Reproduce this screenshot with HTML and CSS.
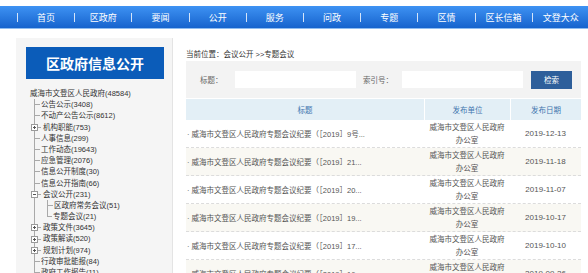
FILE: index.html
```html
<!DOCTYPE html>
<html lang="zh-CN">
<head>
<meta charset="utf-8">
<title>专题会议</title>
<link rel="stylesheet" href="styles.css">
</head>
<body>
<div class="topbar">
  <ul class="nav">
    <li><span>首页</span></li>
    <li><span>区政府</span></li>
    <li><span>要闻</span></li>
    <li><span>公开</span></li>
    <li><span>服务</span></li>
    <li><span>问政</span></li>
    <li><span>专题</span></li>
    <li><span>区情</span></li>
    <li><span>区长信箱</span></li>
    <li><span>文登大众</span></li>
    <li><span></span></li>
  </ul>
</div>
<div class="page">
  <aside class="side">
    <div class="side-title">区政府信息公开</div>
    <div class="tree">
      <div class="root">威海市文登区人民政府(48584)</div>
      <ul class="lvl1">
        <li><div class="node"><span class="stub"></span>公告公示(3408)</div></li>
        <li><div class="node"><span class="stub"></span>不动产公告公示(8612)</div></li>
        <li><div class="node"><span class="tog plus"></span><span class="stub short"></span>机构职能(753)</div></li>
        <li><div class="node"><span class="stub"></span>人事信息(299)</div></li>
        <li><div class="node"><span class="stub"></span>工作动态(19643)</div></li>
        <li><div class="node"><span class="stub"></span>应急管理(2076)</div></li>
        <li><div class="node"><span class="stub"></span>信息公开制度(30)</div></li>
        <li><div class="node"><span class="stub"></span>信息公开指南(66)</div></li>
        <li>
          <div class="node"><span class="tog minus"></span><span class="stub short"></span>会议公开(231)</div>
          <ul class="lvl2">
            <li><div class="node"><span class="stub"></span>区政府常务会议(51)</div></li>
            <li class="last"><div class="node"><span class="stub elbow"></span>专题会议(21)</div></li>
          </ul>
        </li>
        <li><div class="node"><span class="tog plus"></span><span class="stub short"></span>政策文件(3645)</div></li>
        <li><div class="node"><span class="tog plus"></span><span class="stub short"></span>政策解读(520)</div></li>
        <li><div class="node"><span class="tog plus"></span><span class="stub short"></span>规划计划(974)</div></li>
        <li><div class="node"><span class="stub"></span>行政审批能报(84)</div></li>
        <li><div class="node"><span class="stub"></span>政府工作报告(11)</div></li>
      </ul>
    </div>
  </aside>
  <main class="content">
    <div class="crumb">当前位置：会议公开 &gt;&gt;专题会议</div>
    <div class="search">
      <span class="lbl lbl1">标题：</span>
      <input class="ipt" type="text">
      <span class="lbl lbl2">索引号：</span>
      <input class="ipt" type="text">
      <button class="btn" type="button">检索</button>
    </div>
    <div class="thead">
      <div>标题</div>
      <div>发布单位</div>
      <div>发布日期</div>
    </div>
    <div class="rows">
      <div class="row"><div class="c-title">· 威海市文登区人民政府专题会议纪要（［2019］9号...</div><div class="c-unit">威海市文登区人民政府办公室</div><div class="c-date">2019-12-13</div></div>
      <div class="row"><div class="c-title">· 威海市文登区人民政府专题会议纪要（［2019］21...</div><div class="c-unit">威海市文登区人民政府办公室</div><div class="c-date">2019-11-18</div></div>
      <div class="row"><div class="c-title">· 威海市文登区人民政府专题会议纪要（［2019］20...</div><div class="c-unit">威海市文登区人民政府办公室</div><div class="c-date">2019-11-07</div></div>
      <div class="row"><div class="c-title">· 威海市文登区人民政府专题会议纪要（［2019］19...</div><div class="c-unit">威海市文登区人民政府办公室</div><div class="c-date">2019-10-17</div></div>
      <div class="row"><div class="c-title">· 威海市文登区人民政府专题会议纪要（［2019］17...</div><div class="c-unit">威海市文登区人民政府办公室</div><div class="c-date">2019-10-10</div></div>
      <div class="row"><div class="c-title">· 威海市文登区人民政府专题会议纪要（［2019］16...</div><div class="c-unit">威海市文登区人民政府办公室</div><div class="c-date">2019-09-26</div></div>
    </div>
  </main>
</div>
</body>
</html>
```
FILE: styles.css
```css
html, body {
  margin: 0;
  padding: 0;
  background: #fff;
  overflow: hidden;
}
body {
  font-family: "Liberation Sans", "Noto Sans CJK SC", sans-serif;
  font-size: 7.5px;
  color: #333;
}
.topbar {
  margin-top: 6px;
  height: 22px;
  background: linear-gradient(#3e92f3, #1663cd);
  border-bottom: 1px solid #8ebcf0;
  overflow: hidden;
}
.nav {
  list-style: none;
  margin: 0;
  padding: 0 0 0 17px;
  display: flex;
  height: 22px;
  white-space: nowrap;
}
.nav li {
  flex: 0 0 57.2px;
  display: flex;
  align-items: center;
  color: #fff;
  font-size: 9px;
}
.nav li::before {
  content: "";
  width: 1px;
  height: 9px;
  background: rgba(255, 255, 255, 0.8);
}
.nav li span {
  flex: 1;
  text-align: center;
}
.page {
  display: flex;
  align-items: flex-start;
  margin-top: 9px;
  padding-left: 16px;
}
.side {
  flex: 0 0 157px;
  box-sizing: border-box;
  height: 260px;
  background: #f5f5f5;
  border-right: 1px solid #e4e4e4;
  padding: 9px 0 0 10px;
}
.side-title {
  width: 138px;
  height: 32px;
  background: #0b5cb9;
  color: #fff;
  font-size: 14px;
  font-weight: bold;
  display: flex;
  align-items: center;
  justify-content: center;
}
.tree {
  margin-top: 9px;
  padding-left: 4px;
  line-height: 11.2px;
  white-space: nowrap;
}
.tree ul {
  list-style: none;
  margin: 0;
  padding: 0;
}
.lvl1 {
  margin-left: 4px !important;
  border-left: 1px solid #a9a9a9;
}
.lvl2 {
  margin-left: 12px !important;
}
.lvl2 li {
  border-left: 1px solid #a9a9a9;
}
.lvl2 li.last {
  border-left: none;
}
.node {
  display: flex;
  align-items: center;
  height: 11.2px;
}
.stub {
  flex: 0 0 5px;
  height: 1px;
  background: #a9a9a9;
  margin-right: 1px;
}
.stub.short {
  flex-basis: 3px;
  margin-right: 2px;
}
.stub.elbow {
  flex-basis: 5px;
  height: 6px;
  align-self: flex-start;
  background: none;
  border-left: 1px solid #a9a9a9;
  border-bottom: 1px solid #a9a9a9;
  box-sizing: border-box;
}
.tog {
  flex: 0 0 7px;
  height: 7px;
  box-sizing: border-box;
  margin-left: -4px;
  border: 1px solid #9a9a9a;
  background: #fff;
}
.tog.plus {
  background:
    linear-gradient(#555, #555) center / 3px 1px no-repeat,
    linear-gradient(#555, #555) center / 1px 3px no-repeat,
    #fff;
}
.tog.minus {
  background:
    linear-gradient(#555, #555) center / 3px 1px no-repeat,
    #fff;
}
.content {
  flex: 0 0 395px;
  margin-left: 13px;
}
.crumb {
  padding: 11px 0 1px;
  line-height: 11px;
  color: #333;
}
.search {
  height: 37px;
  box-sizing: border-box;
  background: #f3f3f3;
  display: flex;
  align-items: center;
  padding-left: 14px;
  color: #666;
}
.lbl1 {
  flex: 0 0 35px;
}
.lbl2 {
  flex: 0 0 39px;
  margin-left: 7px;
}
.ipt {
  flex: 0 0 121px;
  width: 121px;
  height: 17px;
  box-sizing: border-box;
  border: none;
  background: #fff;
  padding: 0;
  margin: 0;
}
.btn {
  flex: 0 0 41px;
  height: 18px;
  margin: 0 0 0 8px;
  padding: 0;
  border: none;
  background: #2e5f9b;
  color: #fff;
  font-family: inherit;
  font-size: 7.5px;
}
.thead {
  display: grid;
  grid-template-columns: 238px 86px 71px;
  margin-top: 1px;
  height: 21px;
}
.thead div {
  background: #e3eff6;
  color: #4174ae;
  display: flex;
  align-items: center;
  justify-content: center;
}
.thead div + div {
  border-left: 1px solid #fff;
}
.row {
  display: grid;
  grid-template-columns: 238px 86px 71px;
  height: 28px;
  box-sizing: border-box;
  border-bottom: 1px dashed #dcdcdc;
  color: #555;
}
.row:nth-child(even) {
  background: #f9f8f3;
}
.row > div {
  display: flex;
  align-items: center;
}
.c-title {
  padding-left: 1px;
  white-space: nowrap;
  overflow: hidden;
}
.c-unit {
  justify-content: center;
  text-align: center;
  line-height: 13px;
  padding: 0 4px;
}
.c-date {
  justify-content: center;
  font-size: 8px;
}
```
